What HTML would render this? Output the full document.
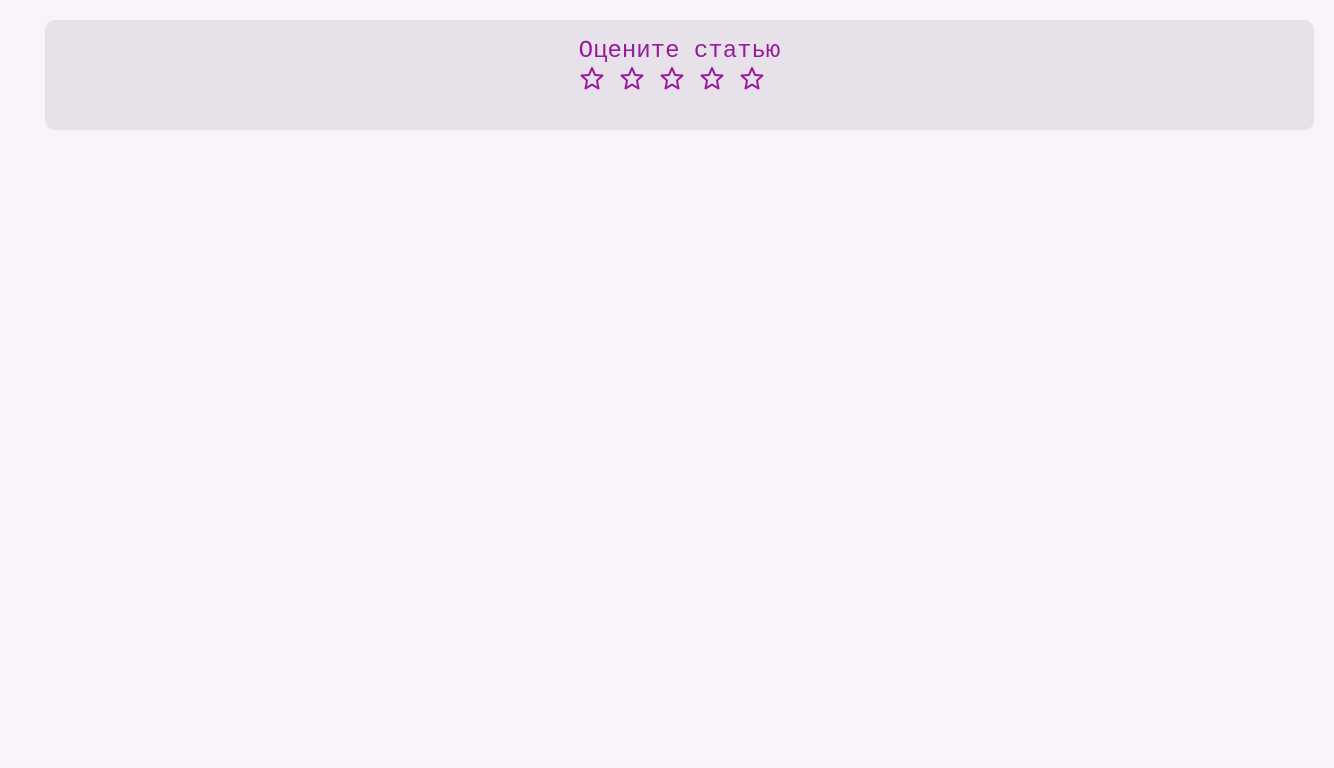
<!DOCTYPE html>
<html><head><meta charset="utf-8"><style>
body{margin:0;background:#f8f4fa;width:1334px;height:768px;overflow:hidden}
.box{position:absolute;left:45px;top:20px;width:1269px;height:110px;background:#e7e2e9;border-radius:10px}
.t{position:absolute;left:45px;width:1269px;top:35px;text-align:center;font:24px "Liberation Mono",monospace;color:#991a9b;line-height:34px}
svg{position:absolute;top:67px}
</style></head><body>
<div class="box"></div>
<div class="t">Оцените статью</div>
<svg width="1334" height="26" style="left:0">
<defs><path id="s" d="M0,-11 L3,-4 L10.5,-3.5 L5,1.5 L6.5,9.5 L0,5.5 L-6.5,9.5 L-5,1.5 L-10.5,-3.5 L-3,-4 Z" fill="none" stroke="#991a9b" stroke-width="2" stroke-linejoin="round"/></defs>
<use href="#s" x="592" y="12"/><use href="#s" x="632" y="12"/><use href="#s" x="672" y="12"/><use href="#s" x="712" y="12"/><use href="#s" x="752" y="12"/>
</svg>
</body></html>
